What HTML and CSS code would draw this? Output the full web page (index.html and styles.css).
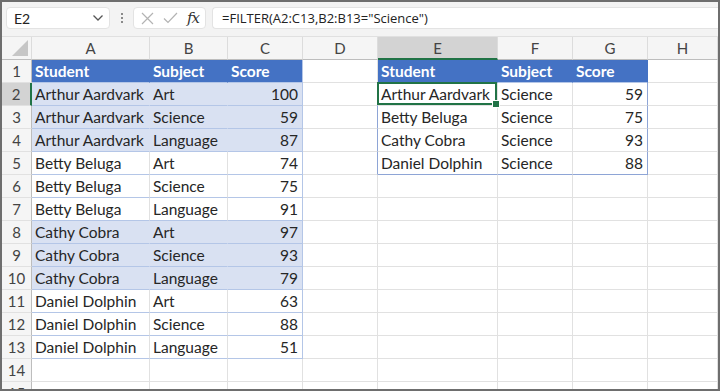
FILE: index.html
```html
<!DOCTYPE html>
<html>
	<head>
		<meta charset="UTF-8">
		<title>FILTER</title>
		<link rel="stylesheet" href="styles.css">
	</head>
	<body>
		<div class="app">
			<!-- formula bar -->
			<div class="fbar">
				<div class="namebox">
					<span>E2</span>
					<svg class="chev" width="12" height="8" viewBox="0 0 12 8"><path d="M1.5 1.5 L6 6 L10.5 1.5" fill="none" stroke="#555" stroke-width="1.3"/></svg>
				</div>
				<div class="dots"><i></i><i></i><i></i></div>
				<div class="btns">
					<svg width="13" height="13" viewBox="0 0 13 13"><path d="M1 1 L12 12 M12 1 L1 12" stroke="#b3b3b3" stroke-width="1.2"/></svg>
					<svg width="15" height="12" viewBox="0 0 15 12"><path d="M1 6.5 L5 10.5 L14 1" fill="none" stroke="#b3b3b3" stroke-width="1.2"/></svg>
					<span class="fx">fx</span>
				</div>
				<div class="formula">=FILTER(A2:C13,B2:B13="Science")</div>
			</div>

			<div class="sheet">
				<div class="r top">
					<div class="c corner"><svg width="16" height="16" viewBox="0 0 16 16"><polygon points="16,0 16,16 0,16" fill="#c6c6c6"/></svg></div>
					<div class="c">A</div><div class="c">B</div><div class="c">C</div><div class="c">D</div>
					<div class="c on">E</div><div class="c">F</div><div class="c">G</div><div class="c">H</div>
				</div>
				<div class="r">
					<div class="c rh">1</div>
					<div class="c hd">Student</div><div class="c hd">Subject</div><div class="c hd last">Score</div>
					<div class="c"></div>
					<div class="c hd">Student</div><div class="c hd">Subject</div><div class="c hd">Score</div>
					<div class="c"></div>
				</div>
				<div class="r">
					<div class="c rh on">2</div>
					<div class="c band">Arthur Aardvark</div><div class="c band">Art</div><div class="c band last num">100</div>
					<div class="c sp-l"></div>
					<div class="c sel">Arthur Aardvark</div><div class="c">Science</div><div class="c num sp-r">59</div>
					<div class="c"></div>
				</div>
				<div class="r">
					<div class="c rh">3</div>
					<div class="c band">Arthur Aardvark</div><div class="c band">Science</div><div class="c band last num">59</div>
					<div class="c sp-l"></div>
					<div class="c">Betty Beluga</div><div class="c">Science</div><div class="c num sp-r">75</div>
					<div class="c"></div>
				</div>
				<div class="r">
					<div class="c rh">4</div>
					<div class="c band">Arthur Aardvark</div><div class="c band">Language</div><div class="c band last num">87</div>
					<div class="c sp-l"></div>
					<div class="c">Cathy Cobra</div><div class="c">Science</div><div class="c num sp-r">93</div>
					<div class="c"></div>
				</div>
				<div class="r">
					<div class="c rh">5</div>
					<div class="c plain">Betty Beluga</div><div class="c plain">Art</div><div class="c plain last num">74</div>
					<div class="c sp-l"></div>
					<div class="c sp-b">Daniel Dolphin</div><div class="c sp-b">Science</div><div class="c num sp-r sp-b">88</div>
					<div class="c"></div>
				</div>
				<div class="r">
					<div class="c rh">6</div>
					<div class="c plain">Betty Beluga</div><div class="c plain">Science</div><div class="c plain last num">75</div>
					<div class="c"></div><div class="c"></div><div class="c"></div><div class="c"></div><div class="c"></div>
				</div>
				<div class="r">
					<div class="c rh">7</div>
					<div class="c plain">Betty Beluga</div><div class="c plain">Language</div><div class="c plain last num">91</div>
					<div class="c"></div><div class="c"></div><div class="c"></div><div class="c"></div><div class="c"></div>
				</div>
				<div class="r">
					<div class="c rh">8</div>
					<div class="c band">Cathy Cobra</div><div class="c band">Art</div><div class="c band last num">97</div>
					<div class="c"></div><div class="c"></div><div class="c"></div><div class="c"></div><div class="c"></div>
				</div>
				<div class="r">
					<div class="c rh">9</div>
					<div class="c band">Cathy Cobra</div><div class="c band">Science</div><div class="c band last num">93</div>
					<div class="c"></div><div class="c"></div><div class="c"></div><div class="c"></div><div class="c"></div>
				</div>
				<div class="r">
					<div class="c rh">10</div>
					<div class="c band">Cathy Cobra</div><div class="c band">Language</div><div class="c band last num">79</div>
					<div class="c"></div><div class="c"></div><div class="c"></div><div class="c"></div><div class="c"></div>
				</div>
				<div class="r">
					<div class="c rh">11</div>
					<div class="c plain">Daniel Dolphin</div><div class="c plain">Art</div><div class="c plain last num">63</div>
					<div class="c"></div><div class="c"></div><div class="c"></div><div class="c"></div><div class="c"></div>
				</div>
				<div class="r">
					<div class="c rh">12</div>
					<div class="c plain">Daniel Dolphin</div><div class="c plain">Science</div><div class="c plain last num">88</div>
					<div class="c"></div><div class="c"></div><div class="c"></div><div class="c"></div><div class="c"></div>
				</div>
				<div class="r">
					<div class="c rh">13</div>
					<div class="c plain">Daniel Dolphin</div><div class="c plain">Language</div><div class="c plain last num">51</div>
					<div class="c"></div><div class="c"></div><div class="c"></div><div class="c"></div><div class="c"></div>
				</div>
				<div class="r">
					<div class="c rh">14</div>
					<div class="c"></div><div class="c"></div><div class="c"></div><div class="c"></div>
					<div class="c"></div><div class="c"></div><div class="c"></div><div class="c"></div>
				</div>
				<div class="r">
					<div class="c rh">15</div>
					<div class="c"></div><div class="c"></div><div class="c"></div><div class="c"></div>
					<div class="c"></div><div class="c"></div><div class="c"></div><div class="c"></div>
				</div>
			</div>
		</div>
	</body>
</html>
```

FILE: styles.css
```css
*{
	box-sizing: border-box;
}
body{
	margin: 0;
	font-family: Lato, "Liberation Sans", sans-serif;
}
.app{
	width: 720px;
	height: 391px;
	border: 2px solid #6e6e6e;
	overflow: hidden;
	background: #fff;
}

/* formula bar */
.fbar{
	height: 35px;
	background: #f3f3f3;
	display: flex;
	align-items: flex-start;
	padding: 5px 0 0 4px;
	border-bottom: 1px solid #e0e0e0;
}
.namebox,.btns,.formula{
	height: 22px;
	background: #fff;
	border: 1px solid #e3e3e3;
	border-radius: 4px;
}
.namebox{
	width: 104px;
	display: flex;
	align-items: center;
	justify-content: space-between;
	padding: 0 5px 0 7px;
	font-size: 14px;
	color: #222;
}
.dots{
	width: 23px;
	height: 22px;
	display: flex;
	flex-direction: column;
	align-items: center;
	justify-content: center;
	gap: 2px;
}
.dots i{
	width: 2px;
	height: 2px;
	background: #8a8a8a;
}
.btns{
	width: 73px;
	display: flex;
	align-items: center;
	justify-content: space-between;
	padding: 0 6px 0 7px;
}
.fx{
	font-family: "DejaVu Serif", "Liberation Serif", serif;
	font-style: italic;
	font-size: 15px;
	color: #333;
	letter-spacing: -1px;
}
.formula{
	flex: 1;
	margin-left: 6px;
	border-right: none;
	border-radius: 4px 0 0 4px;
	padding: 0 9px;
	font-family: "Open Sans", sans-serif;
	font-size: 13px;
	line-height: 20px;
	color: #222;
}

/* grid */
.sheet{
	height: 352px;
	overflow: hidden;
}
.r{
	display: grid;
	grid-template-columns: 30px 118px 78px 75px 75px 120px 75px 75px 1fr;
	height: 23px;
}
.c{
	border-right: 1px solid #e1e1e1;
	border-bottom: 1px solid #e1e1e1;
	padding: 0 3px;
	font-size: 15.5px;
	line-height: 22px;
	color: #262626;
	white-space: nowrap;
	overflow: hidden;
}
.num{
	text-align: right;
	padding-right: 4px;
}
.top .c{
	background: #f5f5f5;
	color: #444;
	font-size: 15px;
	text-align: center;
	border-right-color: #dcdcdc;
	border-bottom-color: #bdbdbd;
}
.top .corner{
	display: flex;
	align-items: flex-end;
	justify-content: flex-end;
	padding: 0 3px 3px 0;
}
.top .on{
	background: #d3d3d3;
	border-bottom: 2px solid #217346;
}
.rh{
	background: #f5f5f5;
	color: #444;
	font-size: 15px;
	text-align: center;
	padding: 0;
	border-right-color: #bdbdbd;
	border-bottom-color: #e1e1e1;
}
.rh.on{
	background: #d3d3d3;
	border-right: 2px solid #217346;
}

/* table style */
.hd{
	background: #4472c4;
	color: #fff;
	font-weight: bold;
	border-right-color: #4472c4;
	border-bottom-color: #b4c6e7;
}
.band{
	background: #d9e1f2;
	border-right-color: #d9e1f2;
	border-bottom-color: #b4c6e7;
}
.plain{
	border-bottom-color: #b4c6e7;
}
.last{
	border-right-color: #b4c6e7;
}

/* spill range */
.sp-l,.sp-r{
	border-right-color: #8ea5d6;
}
.sp-b{
	border-bottom-color: #8ea5d6;
}
.sel{
	position: relative;
	z-index: 2;
	overflow: visible;
}
.sel:after{
	content: '';
	position: absolute;
	left: -1px;
	top: -1px;
	right: 0;
	bottom: 0;
	border: 2px solid #217346;
}
.sel:before{
	content: '';
	position: absolute;
	right: -3px;
	bottom: -3px;
	width: 6px;
	height: 6px;
	background: #217346;
	border: 1px solid #fff;
	z-index: 1;
}
```
